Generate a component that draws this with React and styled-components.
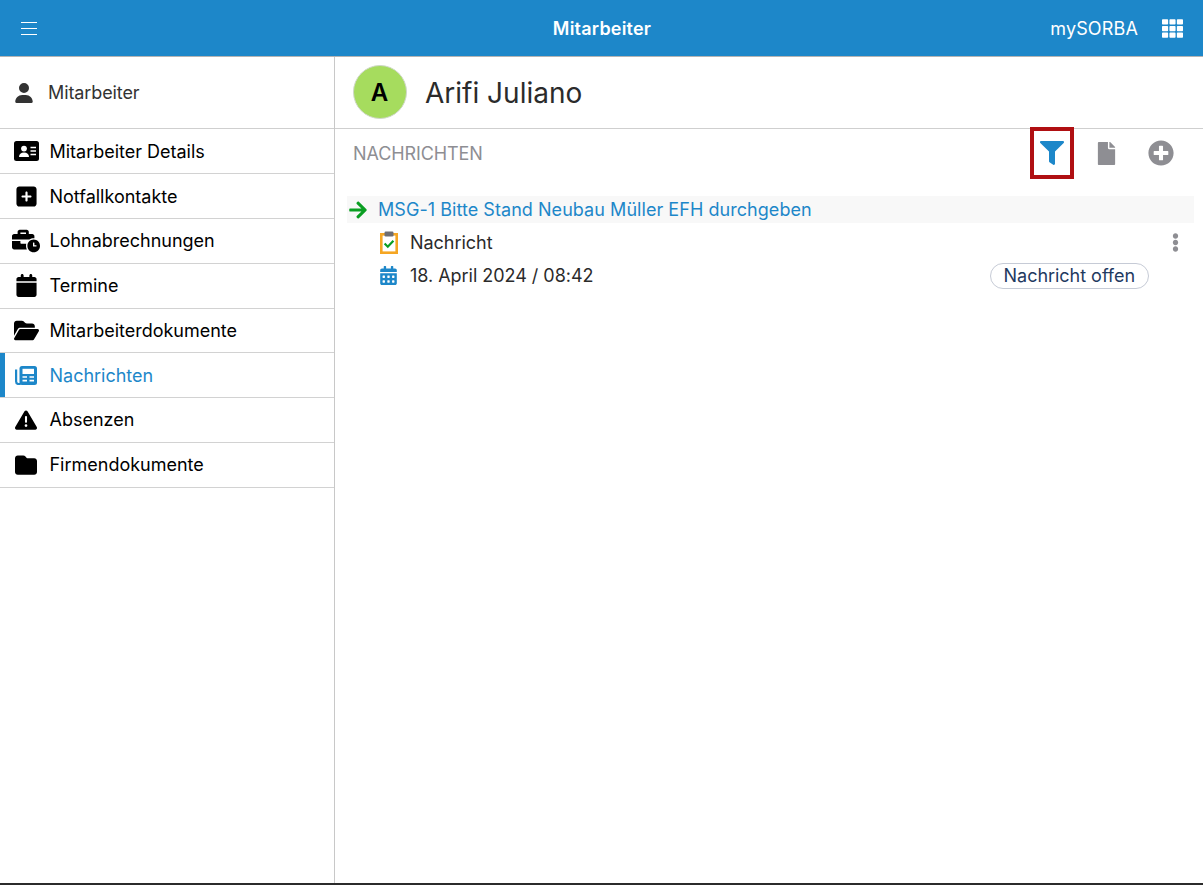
import React from "react";
import styled, { createGlobalStyle } from "styled-components";
import { FaTh, FaFilter, FaPlusCircle, FaEllipsisV, FaArrowRight, FaCalendarAlt, FaBusinessTime, FaFile } from "react-icons/fa";
import {
  FaUser, FaSquarePlus, FaCalendar, FaFolderOpen,
  FaTriangleExclamation, FaFolder,
} from "react-icons/fa6";

const Global = createGlobalStyle`
  html, body { margin: 0; padding: 0; height: 100%; background: #fff; }
  body { font-family: Inter, "Liberation Sans", sans-serif; -webkit-font-smoothing: antialiased; }
  #root { height: 100%; }
`;

const Page = styled.div`
  height: 885px;
  display: flex;
  flex-direction: column;
  border-bottom: 2px solid #2b2b2b;
  box-sizing: border-box;
  overflow: hidden;
`;

const TopBar = styled.header`
  flex: 0 0 57px;
  box-sizing: border-box;
  background: #1d87c9;
  border-bottom: 1px solid #b4b4b4;
  display: flex;
  align-items: center;
  position: relative;
  padding: 0 20px 0 21px;
  color: #fff;
`;

const Title = styled.div`
  position: absolute;
  left: 1px;
  right: 0;
  text-align: center;
  font-size: 18px;
  font-weight: 600;
  letter-spacing: 0.2px;
  pointer-events: none;
`;

const Brand = styled.div`
  margin-left: auto;
  font-size: 18px;
  letter-spacing: 0.15px;
  margin-right: 24px;
`;

const Body = styled.div`
  flex: 1;
  display: flex;
  min-height: 0;
`;

const Sidebar = styled.aside`
  flex: 0 0 335px;
  box-sizing: border-box;
  border-right: 1px solid #c8c8c8;
`;

const SideHead = styled.div`
  height: 72px;
  box-sizing: border-box;
  border-bottom: 1px solid #cfcfcf;
  display: flex;
  align-items: center;
  padding: 0 0 0 14px;
  color: #333;
  font-size: 18px;
  gap: 14px;
  letter-spacing: -0.1px;
`;

const NavList = styled.nav`
  padding-top: 0.5px;
`;

const NavRow = styled.div`
  height: 44.75px;
  box-sizing: border-box;
  border-bottom: 1px solid #d2d2d2;
  display: flex;
  align-items: center;
  font-size: 18px;
  letter-spacing: -0.01px;
  color: ${(p) => (p.$active ? "#1d87c9" : "#000")};
  box-shadow: ${(p) => (p.$active ? "inset 5px 0 0 #1d87c9" : "none")};
`;

const NavIcon = styled.span`
  flex: 0 0 49.5px;
  display: flex;
  justify-content: center;
  padding-left: 3px;
  box-sizing: border-box;
  font-size: ${(p) => p.$size || 22}px;
  line-height: 0;
`;

const Main = styled.main`
  flex: 1;
  min-width: 0;
`;

const PersonHead = styled.div`
  height: 72px;
  box-sizing: border-box;
  border-bottom: 1px solid #cfcfcf;
  display: flex;
  align-items: center;
  padding: 0 0 1px 18px;
  gap: 18px;
`;

const Avatar = styled.div`
  width: 54px;
  height: 54px;
  box-sizing: border-box;
  border-radius: 50%;
  border: 1px solid #cfd8c8;
  background: #a6dc5e;
  display: flex;
  align-items: center;
  justify-content: center;
  color: #000;
  font-size: 24px;
  font-weight: 600;
  padding-right: 1px;
`;

const PersonName = styled.div`
  font-size: 28px;
  color: #2b2b2b;
  margin-top: 1px;
`;

const SectionBar = styled.div`
  height: 50px;
  box-sizing: border-box;
  display: flex;
  align-items: center;
  padding: 0 19px 2px 18px;
`;

const SectionTitle = styled.div`
  font-size: 18px;
  color: #8e8e93;
  letter-spacing: -0.1px;
  flex: 1;
  margin-top: 1px;
`;

const ToolButton = styled.span`
  flex: none;
  display: flex;
  align-items: center;
  justify-content: center;
  width: ${(p) => p.$w || 44}px;
  height: 52px;
  box-sizing: border-box;
  font-size: ${(p) => p.$size || 24}px;
  color: ${(p) => p.$color || "#8e8e93"};
  border: ${(p) => (p.$framed ? "4px solid #b00f12" : "none")};
`;

const Message = styled.section`
  padding: 17px 9px 0 12px;
`;

const MessageHead = styled.div`
  height: 27px;
  background: #f8f8f8;
  display: flex;
  align-items: center;
  font-size: 18px;
  letter-spacing: 0.05px;
  color: #1d87c9;
  padding: 0 0 0 1px;
  gap: 10px;
  margin-bottom: 3px;
`;

const ArrowIcon = styled.span`
  color: #0a9e22;
  font-size: 20px;
  line-height: 0;
`;

const MetaRow = styled.div`
  height: 33px;
  display: flex;
  align-items: center;
  padding-left: 32px;
  gap: 12px;
  font-size: 18px;
  letter-spacing: -0.03px;
  color: #2b2b2b;
`;

const MetaIcon = styled.span`
  flex: 0 0 19px;
  display: flex;
  justify-content: center;
  line-height: 0;
  color: #1d87c9;
  font-size: 19px;
`;

const MoreButton = styled.span`
  margin-left: auto;
  margin-right: 9px;
  color: #8e8e93;
  font-size: 19px;
  line-height: 0;
`;

const Badge = styled.span`
  margin-left: auto;
  margin-right: 45px;
  height: 26px;
  box-sizing: border-box;
  border: 1px solid #c6cbd6;
  border-radius: 13px;
  padding: 0 13px;
  display: flex;
  align-items: center;
  color: #1f3a5f;
`;

const Hamburger = () => (
  <svg width="16" height="14" viewBox="0 0 16 14" fill="none" stroke="#fff" strokeWidth="1">
    <path d="M0 1.5h16M0 7.5h16M0 13.5h16" />
  </svg>
);

const ClipboardIcon = () => (
  <svg width="18" height="23" viewBox="0 0 18 23">
    <rect x="1.3" y="3.3" width="15.4" height="18.4" fill="#fff" stroke="#f5a623" strokeWidth="2.6" />
    <rect x="4.5" y="0.5" width="9" height="5" rx="1.2" fill="#6e6e73" />
    <path d="M4.6 12.5l3.2 3.2 5.6-6" fill="none" stroke="#0a9e22" strokeWidth="2.2" />
  </svg>
);

const IdCardIcon = () => (
  <svg width="25" height="20" viewBox="0 0 25 20">
    <rect width="25" height="20" rx="2.5" fill="currentColor" />
    <circle cx="10" cy="7.6" r="2.9" fill="#fff" />
    <path d="M5 16c0-3 2-4.6 5-4.6s5 1.6 5 4.6z" fill="#fff" />
    <path d="M16.5 6.6h5.5M16.5 10h5.5M16.5 13.4h5.5" stroke="#fff" strokeWidth="1.5" />
  </svg>
);

const NewspaperIcon = () => (
  <svg width="22" height="19" viewBox="0 0 22 19">
    <path d="M1.1 3.5v12a2.5 2.5 0 0 0 2.5 2.5h2" fill="none" stroke="currentColor" strokeWidth="2.2" />
    <rect x="4.5" y="0" width="17.5" height="19" rx="2.5" fill="currentColor" />
    <rect x="7.5" y="2.8" width="11.5" height="5.2" fill="#fff" />
    <path d="M7.5 11h4.5M14.5 11h4.5M7.5 14.6h4.5M14.5 14.6h4.5" stroke="#fff" strokeWidth="1.6" />
  </svg>
);

const items = [
  { label: "Mitarbeiter Details", Icon: IdCardIcon },
  { label: "Notfallkontakte", Icon: FaSquarePlus, size: 23 },
  { label: "Lohnabrechnungen", Icon: FaBusinessTime, size: 28 },
  { label: "Termine", Icon: FaCalendar, size: 23 },
  { label: "Mitarbeiterdokumente", Icon: FaFolderOpen, size: 25 },
  { label: "Nachrichten", Icon: NewspaperIcon, active: true },
  { label: "Absenzen", Icon: FaTriangleExclamation, size: 22 },
  { label: "Firmendokumente", Icon: FaFolder, size: 22 },
];

export default function App() {
  return (
    <Page>
      <Global />
      <TopBar>
        <Hamburger />
        <Title>Mitarbeiter</Title>
        <Brand>mySORBA</Brand>
        <FaTh size={21} />
      </TopBar>
      <Body>
        <Sidebar>
          <SideHead>
            <FaUser size={20} />
            <span>Mitarbeiter</span>
          </SideHead>
          <NavList>
            {items.map(({ label, Icon, size, active }) => (
              <NavRow key={label} $active={active}>
                <NavIcon $size={size}><Icon /></NavIcon>
                {label}
              </NavRow>
            ))}
          </NavList>
        </Sidebar>
        <Main>
          <PersonHead>
            <Avatar>A</Avatar>
            <PersonName>Arifi Juliano</PersonName>
          </PersonHead>
          <SectionBar>
            <SectionTitle>NACHRICHTEN</SectionTitle>
            <ToolButton $framed $color="#1d87c9" $size={24}><FaFilter /></ToolButton>
            <ToolButton $w={64} $size={23}><FaFile /></ToolButton>
            <ToolButton $w={46} $size={26}><FaPlusCircle /></ToolButton>
          </SectionBar>
          <Message>
            <MessageHead>
              <ArrowIcon><FaArrowRight /></ArrowIcon>
              MSG-1 Bitte Stand Neubau Müller EFH durchgeben
            </MessageHead>
            <MetaRow>
              <MetaIcon><ClipboardIcon /></MetaIcon>
              Nachricht
              <MoreButton><FaEllipsisV /></MoreButton>
            </MetaRow>
            <MetaRow>
              <MetaIcon><FaCalendarAlt /></MetaIcon>
              18. April 2024 / 08:42
              <Badge>Nachricht offen</Badge>
            </MetaRow>
          </Message>
        </Main>
      </Body>
    </Page>
  );
}
